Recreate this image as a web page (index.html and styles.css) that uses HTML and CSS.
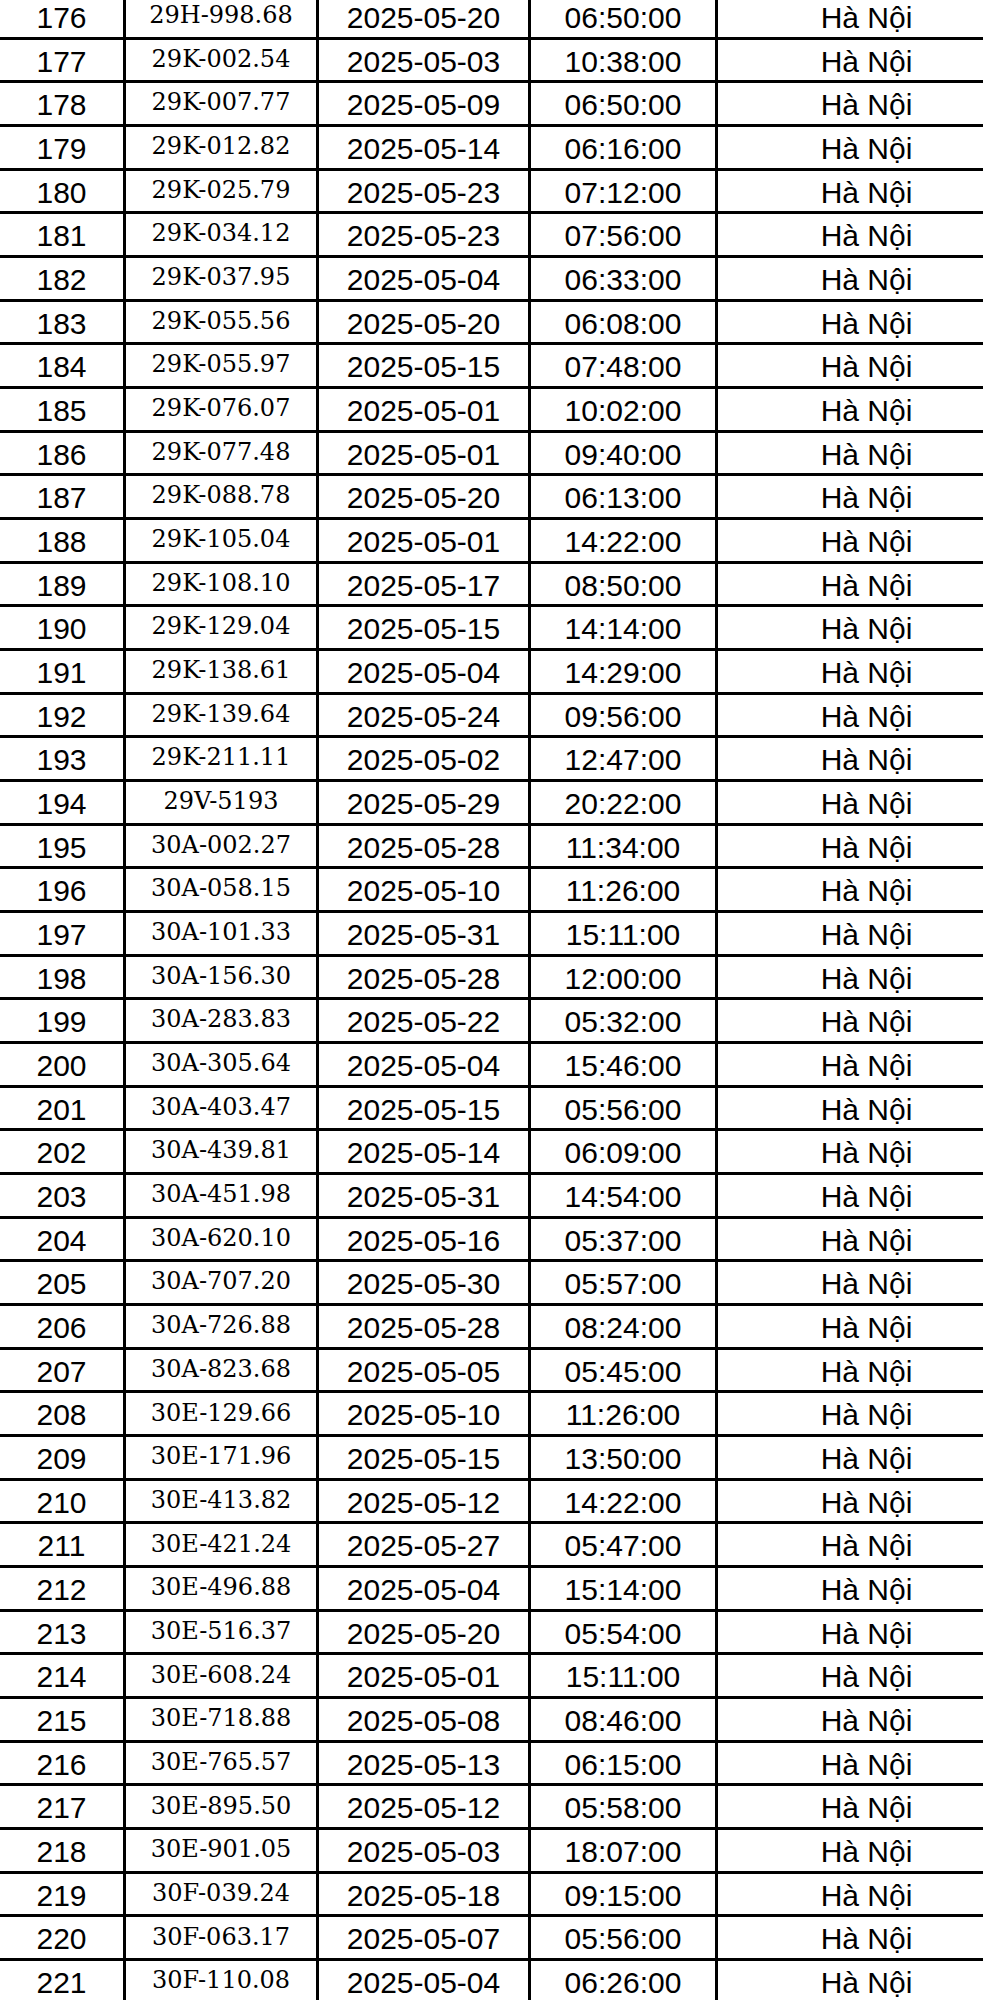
FILE: index.html
```html
<!DOCTYPE html>
<html lang="vi">
<head>
<meta charset="utf-8">
<title>Danh sách</title>
<link rel="stylesheet" href="styles.css">
</head>
<body>
<div class="sheet">
<div class="c s">176</div><div class="c p">29H-998.68</div><div class="c s">2025-05-20</div><div class="c s">06:50:00</div><div class="c s">Hà Nội</div>
<div class="c s">177</div><div class="c p">29K-002.54</div><div class="c s">2025-05-03</div><div class="c s">10:38:00</div><div class="c s">Hà Nội</div>
<div class="c s">178</div><div class="c p">29K-007.77</div><div class="c s">2025-05-09</div><div class="c s">06:50:00</div><div class="c s">Hà Nội</div>
<div class="c s">179</div><div class="c p">29K-012.82</div><div class="c s">2025-05-14</div><div class="c s">06:16:00</div><div class="c s">Hà Nội</div>
<div class="c s">180</div><div class="c p">29K-025.79</div><div class="c s">2025-05-23</div><div class="c s">07:12:00</div><div class="c s">Hà Nội</div>
<div class="c s">181</div><div class="c p">29K-034.12</div><div class="c s">2025-05-23</div><div class="c s">07:56:00</div><div class="c s">Hà Nội</div>
<div class="c s">182</div><div class="c p">29K-037.95</div><div class="c s">2025-05-04</div><div class="c s">06:33:00</div><div class="c s">Hà Nội</div>
<div class="c s">183</div><div class="c p">29K-055.56</div><div class="c s">2025-05-20</div><div class="c s">06:08:00</div><div class="c s">Hà Nội</div>
<div class="c s">184</div><div class="c p">29K-055.97</div><div class="c s">2025-05-15</div><div class="c s">07:48:00</div><div class="c s">Hà Nội</div>
<div class="c s">185</div><div class="c p">29K-076.07</div><div class="c s">2025-05-01</div><div class="c s">10:02:00</div><div class="c s">Hà Nội</div>
<div class="c s">186</div><div class="c p">29K-077.48</div><div class="c s">2025-05-01</div><div class="c s">09:40:00</div><div class="c s">Hà Nội</div>
<div class="c s">187</div><div class="c p">29K-088.78</div><div class="c s">2025-05-20</div><div class="c s">06:13:00</div><div class="c s">Hà Nội</div>
<div class="c s">188</div><div class="c p">29K-105.04</div><div class="c s">2025-05-01</div><div class="c s">14:22:00</div><div class="c s">Hà Nội</div>
<div class="c s">189</div><div class="c p">29K-108.10</div><div class="c s">2025-05-17</div><div class="c s">08:50:00</div><div class="c s">Hà Nội</div>
<div class="c s">190</div><div class="c p">29K-129.04</div><div class="c s">2025-05-15</div><div class="c s">14:14:00</div><div class="c s">Hà Nội</div>
<div class="c s">191</div><div class="c p">29K-138.61</div><div class="c s">2025-05-04</div><div class="c s">14:29:00</div><div class="c s">Hà Nội</div>
<div class="c s">192</div><div class="c p">29K-139.64</div><div class="c s">2025-05-24</div><div class="c s">09:56:00</div><div class="c s">Hà Nội</div>
<div class="c s">193</div><div class="c p">29K-211.11</div><div class="c s">2025-05-02</div><div class="c s">12:47:00</div><div class="c s">Hà Nội</div>
<div class="c s">194</div><div class="c p">29V-5193</div><div class="c s">2025-05-29</div><div class="c s">20:22:00</div><div class="c s">Hà Nội</div>
<div class="c s">195</div><div class="c p">30A-002.27</div><div class="c s">2025-05-28</div><div class="c s">11:34:00</div><div class="c s">Hà Nội</div>
<div class="c s">196</div><div class="c p">30A-058.15</div><div class="c s">2025-05-10</div><div class="c s">11:26:00</div><div class="c s">Hà Nội</div>
<div class="c s">197</div><div class="c p">30A-101.33</div><div class="c s">2025-05-31</div><div class="c s">15:11:00</div><div class="c s">Hà Nội</div>
<div class="c s">198</div><div class="c p">30A-156.30</div><div class="c s">2025-05-28</div><div class="c s">12:00:00</div><div class="c s">Hà Nội</div>
<div class="c s">199</div><div class="c p">30A-283.83</div><div class="c s">2025-05-22</div><div class="c s">05:32:00</div><div class="c s">Hà Nội</div>
<div class="c s">200</div><div class="c p">30A-305.64</div><div class="c s">2025-05-04</div><div class="c s">15:46:00</div><div class="c s">Hà Nội</div>
<div class="c s">201</div><div class="c p">30A-403.47</div><div class="c s">2025-05-15</div><div class="c s">05:56:00</div><div class="c s">Hà Nội</div>
<div class="c s">202</div><div class="c p">30A-439.81</div><div class="c s">2025-05-14</div><div class="c s">06:09:00</div><div class="c s">Hà Nội</div>
<div class="c s">203</div><div class="c p">30A-451.98</div><div class="c s">2025-05-31</div><div class="c s">14:54:00</div><div class="c s">Hà Nội</div>
<div class="c s">204</div><div class="c p">30A-620.10</div><div class="c s">2025-05-16</div><div class="c s">05:37:00</div><div class="c s">Hà Nội</div>
<div class="c s">205</div><div class="c p">30A-707.20</div><div class="c s">2025-05-30</div><div class="c s">05:57:00</div><div class="c s">Hà Nội</div>
<div class="c s">206</div><div class="c p">30A-726.88</div><div class="c s">2025-05-28</div><div class="c s">08:24:00</div><div class="c s">Hà Nội</div>
<div class="c s">207</div><div class="c p">30A-823.68</div><div class="c s">2025-05-05</div><div class="c s">05:45:00</div><div class="c s">Hà Nội</div>
<div class="c s">208</div><div class="c p">30E-129.66</div><div class="c s">2025-05-10</div><div class="c s">11:26:00</div><div class="c s">Hà Nội</div>
<div class="c s">209</div><div class="c p">30E-171.96</div><div class="c s">2025-05-15</div><div class="c s">13:50:00</div><div class="c s">Hà Nội</div>
<div class="c s">210</div><div class="c p">30E-413.82</div><div class="c s">2025-05-12</div><div class="c s">14:22:00</div><div class="c s">Hà Nội</div>
<div class="c s">211</div><div class="c p">30E-421.24</div><div class="c s">2025-05-27</div><div class="c s">05:47:00</div><div class="c s">Hà Nội</div>
<div class="c s">212</div><div class="c p">30E-496.88</div><div class="c s">2025-05-04</div><div class="c s">15:14:00</div><div class="c s">Hà Nội</div>
<div class="c s">213</div><div class="c p">30E-516.37</div><div class="c s">2025-05-20</div><div class="c s">05:54:00</div><div class="c s">Hà Nội</div>
<div class="c s">214</div><div class="c p">30E-608.24</div><div class="c s">2025-05-01</div><div class="c s">15:11:00</div><div class="c s">Hà Nội</div>
<div class="c s">215</div><div class="c p">30E-718.88</div><div class="c s">2025-05-08</div><div class="c s">08:46:00</div><div class="c s">Hà Nội</div>
<div class="c s">216</div><div class="c p">30E-765.57</div><div class="c s">2025-05-13</div><div class="c s">06:15:00</div><div class="c s">Hà Nội</div>
<div class="c s">217</div><div class="c p">30E-895.50</div><div class="c s">2025-05-12</div><div class="c s">05:58:00</div><div class="c s">Hà Nội</div>
<div class="c s">218</div><div class="c p">30E-901.05</div><div class="c s">2025-05-03</div><div class="c s">18:07:00</div><div class="c s">Hà Nội</div>
<div class="c s">219</div><div class="c p">30F-039.24</div><div class="c s">2025-05-18</div><div class="c s">09:15:00</div><div class="c s">Hà Nội</div>
<div class="c s">220</div><div class="c p">30F-063.17</div><div class="c s">2025-05-07</div><div class="c s">05:56:00</div><div class="c s">Hà Nội</div>
<div class="c s">221</div><div class="c p">30F-110.08</div><div class="c s">2025-05-04</div><div class="c s">06:26:00</div><div class="c s">Hà Nội</div>
</div>
</body>
</html>
```
FILE: styles.css
```css
html, body {
  margin: 0;
  padding: 0;
  background: #ffffff;
  overflow: hidden;
}

.sheet {
  display: grid;
  grid-template-columns: 126px 193px 212px 187px 300px;
  grid-template-rows: 39.5px;
  grid-auto-rows: 43.68px;
  width: 1018px;
  color: #000000;
}

.c {
  display: flex;
  align-items: flex-end;
  justify-content: center;
  border-right: 3px solid #000000;
  border-bottom: 3px solid #000000;
  white-space: nowrap;
  overflow: hidden;
}

.s {
  font-family: "Liberation Sans", Arial, sans-serif;
  font-size: 30px;
  line-height: 30px;
  padding-bottom: 3.6px;
}

.p {
  font-family: "DejaVu Serif", "Liberation Serif", serif;
  font-size: 24px;
  line-height: 24px;
  padding-bottom: 9.5px;
}
```
